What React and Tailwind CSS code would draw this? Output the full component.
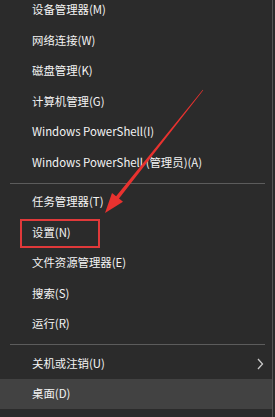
import React from "react";

const font = { fontFamily: '"Noto Sans CJK SC", "Microsoft YaHei", sans-serif' };

function Row({ children, highlight, extra }) {
  return (
    <div
      className={`relative h-[30.5px] flex items-center pl-[32px] text-[11.4px] text-[#f4f4f4] ${highlight ? "bg-[#424242] mr-[3px]" : ""}`}
    >
      <span className="leading-none">{children}</span>
      {extra}
    </div>
  );
}

function Sep() {
  return (
    <div className="h-[9px] flex flex-col">
      <div className="h-[5px]" />
      <div className="h-px bg-[#5c5c5c] ml-[10px] mr-[10px]" />
    </div>
  );
}

export default function App() {
  return (
    <div className="relative w-[275px] h-[417px] bg-[#2b2b2b] overflow-hidden" style={font}>
      <div className="absolute right-[2px] top-0 bottom-0 w-px bg-[#555555]" />
      <div className="flex flex-col mt-[-5.25px]">
        <Row>设备管理器(M)</Row>
        <Row>网络连接(W)</Row>
        <Row>磁盘管理(K)</Row>
        <Row>计算机管理(G)</Row>
        <Row>Windows PowerShell(I)</Row>
        <Row>Windows PowerShell (管理员)(A)</Row>
        <Sep />
        <Row>任务管理器(T)</Row>
        <Row
          extra={
            <div className="absolute left-[20px] top-[1.75px] w-[80px] h-[29px] border-2 border-[#e0393a]" />
          }
        >
          设置(N)
        </Row>
        <Row>文件资源管理器(E)</Row>
        <Row>搜索(S)</Row>
        <Row>运行(R)</Row>
        <Sep />
        <Row
          extra={
            <svg className="absolute left-[256px] top-[10px]" width="8" height="12" viewBox="0 0 8 12">
              <polyline points="2,1 6.5,6 2,11" fill="none" stroke="#c8c8c8" strokeWidth="1.3" />
            </svg>
          }
        >
          关机或注销(U)
        </Row>
        <Row highlight>桌面(D)</Row>
      </div>
      <svg className="absolute left-0 top-0 pointer-events-none" width="275" height="417" viewBox="0 0 275 417">
        <polygon
          points="203.2,90.2 119,198.5 123,201.8 105,213 112,193 116.1,196.3 202.8,89.8"
          fill="#e8322f"
        />
      </svg>
    </div>
  );
}
